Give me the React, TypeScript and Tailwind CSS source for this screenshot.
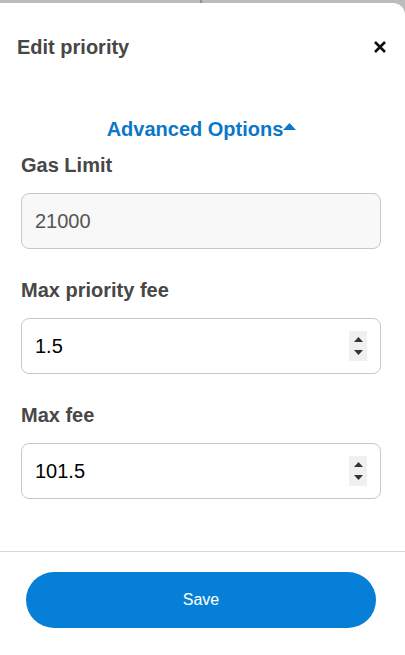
import React from "react";

function Spinner() {
  return (
    <div className="flex h-[30px] w-[18px] flex-col items-center justify-center gap-[8px] bg-[#f0f0f0]">
      <svg width="9" height="5" viewBox="0 0 9 5"><path d="M0 5 L4.5 0 L9 5 Z" fill="#333" /></svg>
      <svg width="9" height="5" viewBox="0 0 9 5"><path d="M0 0 L4.5 5 L9 0 Z" fill="#333" /></svg>
    </div>
  );
}

function Field({ label, value, disabled, spinner }: { label: string; value: string; disabled?: boolean; spinner?: boolean }) {
  return (
    <div className="flex flex-col">
      <div className="text-[20px] font-bold leading-[24px] text-[#474747]">{label}</div>
      <div
        className={`mt-[16px] flex h-[56px] items-center justify-between rounded-[8px] border border-[#c8c8c8] pl-[13px] pr-[13px] ${
          disabled ? "bg-[#f8f8f8]" : "bg-white"
        }`}
      >
        <span className={`text-[20px] ${disabled ? "text-[#555]" : "text-black"}`}>{value}</span>
        {spinner && <Spinner />}
      </div>
    </div>
  );
}

export default function App() {
  return (
    <div className="h-[655px] w-[405px] overflow-hidden bg-[#bcbcbc] pt-[3px]" style={{ fontFamily: '"Liberation Sans", Arial, sans-serif' }}>
      <div className="relative h-[652px] w-full rounded-tr-[12px] bg-white">
        <div className="pointer-events-none absolute left-[200px] top-[-3px] h-[3px] w-[2px] bg-[#8f8f8f]" />
        <div className="flex h-[88px] items-center justify-between pl-[17px] pr-[18px]">
          <div className="text-[20px] font-bold leading-[24px] text-[#474747]">Edit priority</div>
          <svg width="14" height="14" viewBox="0 0 14 14">
            <path d="M2 2 L12 12 M12 2 L2 12" stroke="#111" strokeWidth="2.6" strokeLinecap="butt" />
          </svg>
        </div>
        <div className="mt-[26px] flex items-center justify-center pr-[2px]">
          <span className="text-[20px] font-bold leading-[24px] text-[#0a77c9]">Advanced Options</span>
          <svg width="13" height="7" viewBox="0 0 13 7" className="mb-[5px]"><path d="M0 7 L6.5 0 L13 7 Z" fill="#0a77c9" /></svg>
        </div>
        <div className="mt-[12px] flex flex-col gap-[29px] pl-[21px] pr-[24px]">
          <Field label="Gas Limit" value="21000" disabled />
          <Field label="Max priority fee" value="1.5" spinner />
          <Field label="Max fee" value="101.5" spinner />
        </div>
        <div className="mt-[52px] h-px w-full bg-[#d6d6dc]" />
        <div className="flex pl-[26px] pt-[20px]">
          <button className="h-[56px] w-[350px] rounded-full bg-[#077fd6] text-[16px] text-white">Save</button>
        </div>
      </div>
    </div>
  );
}
